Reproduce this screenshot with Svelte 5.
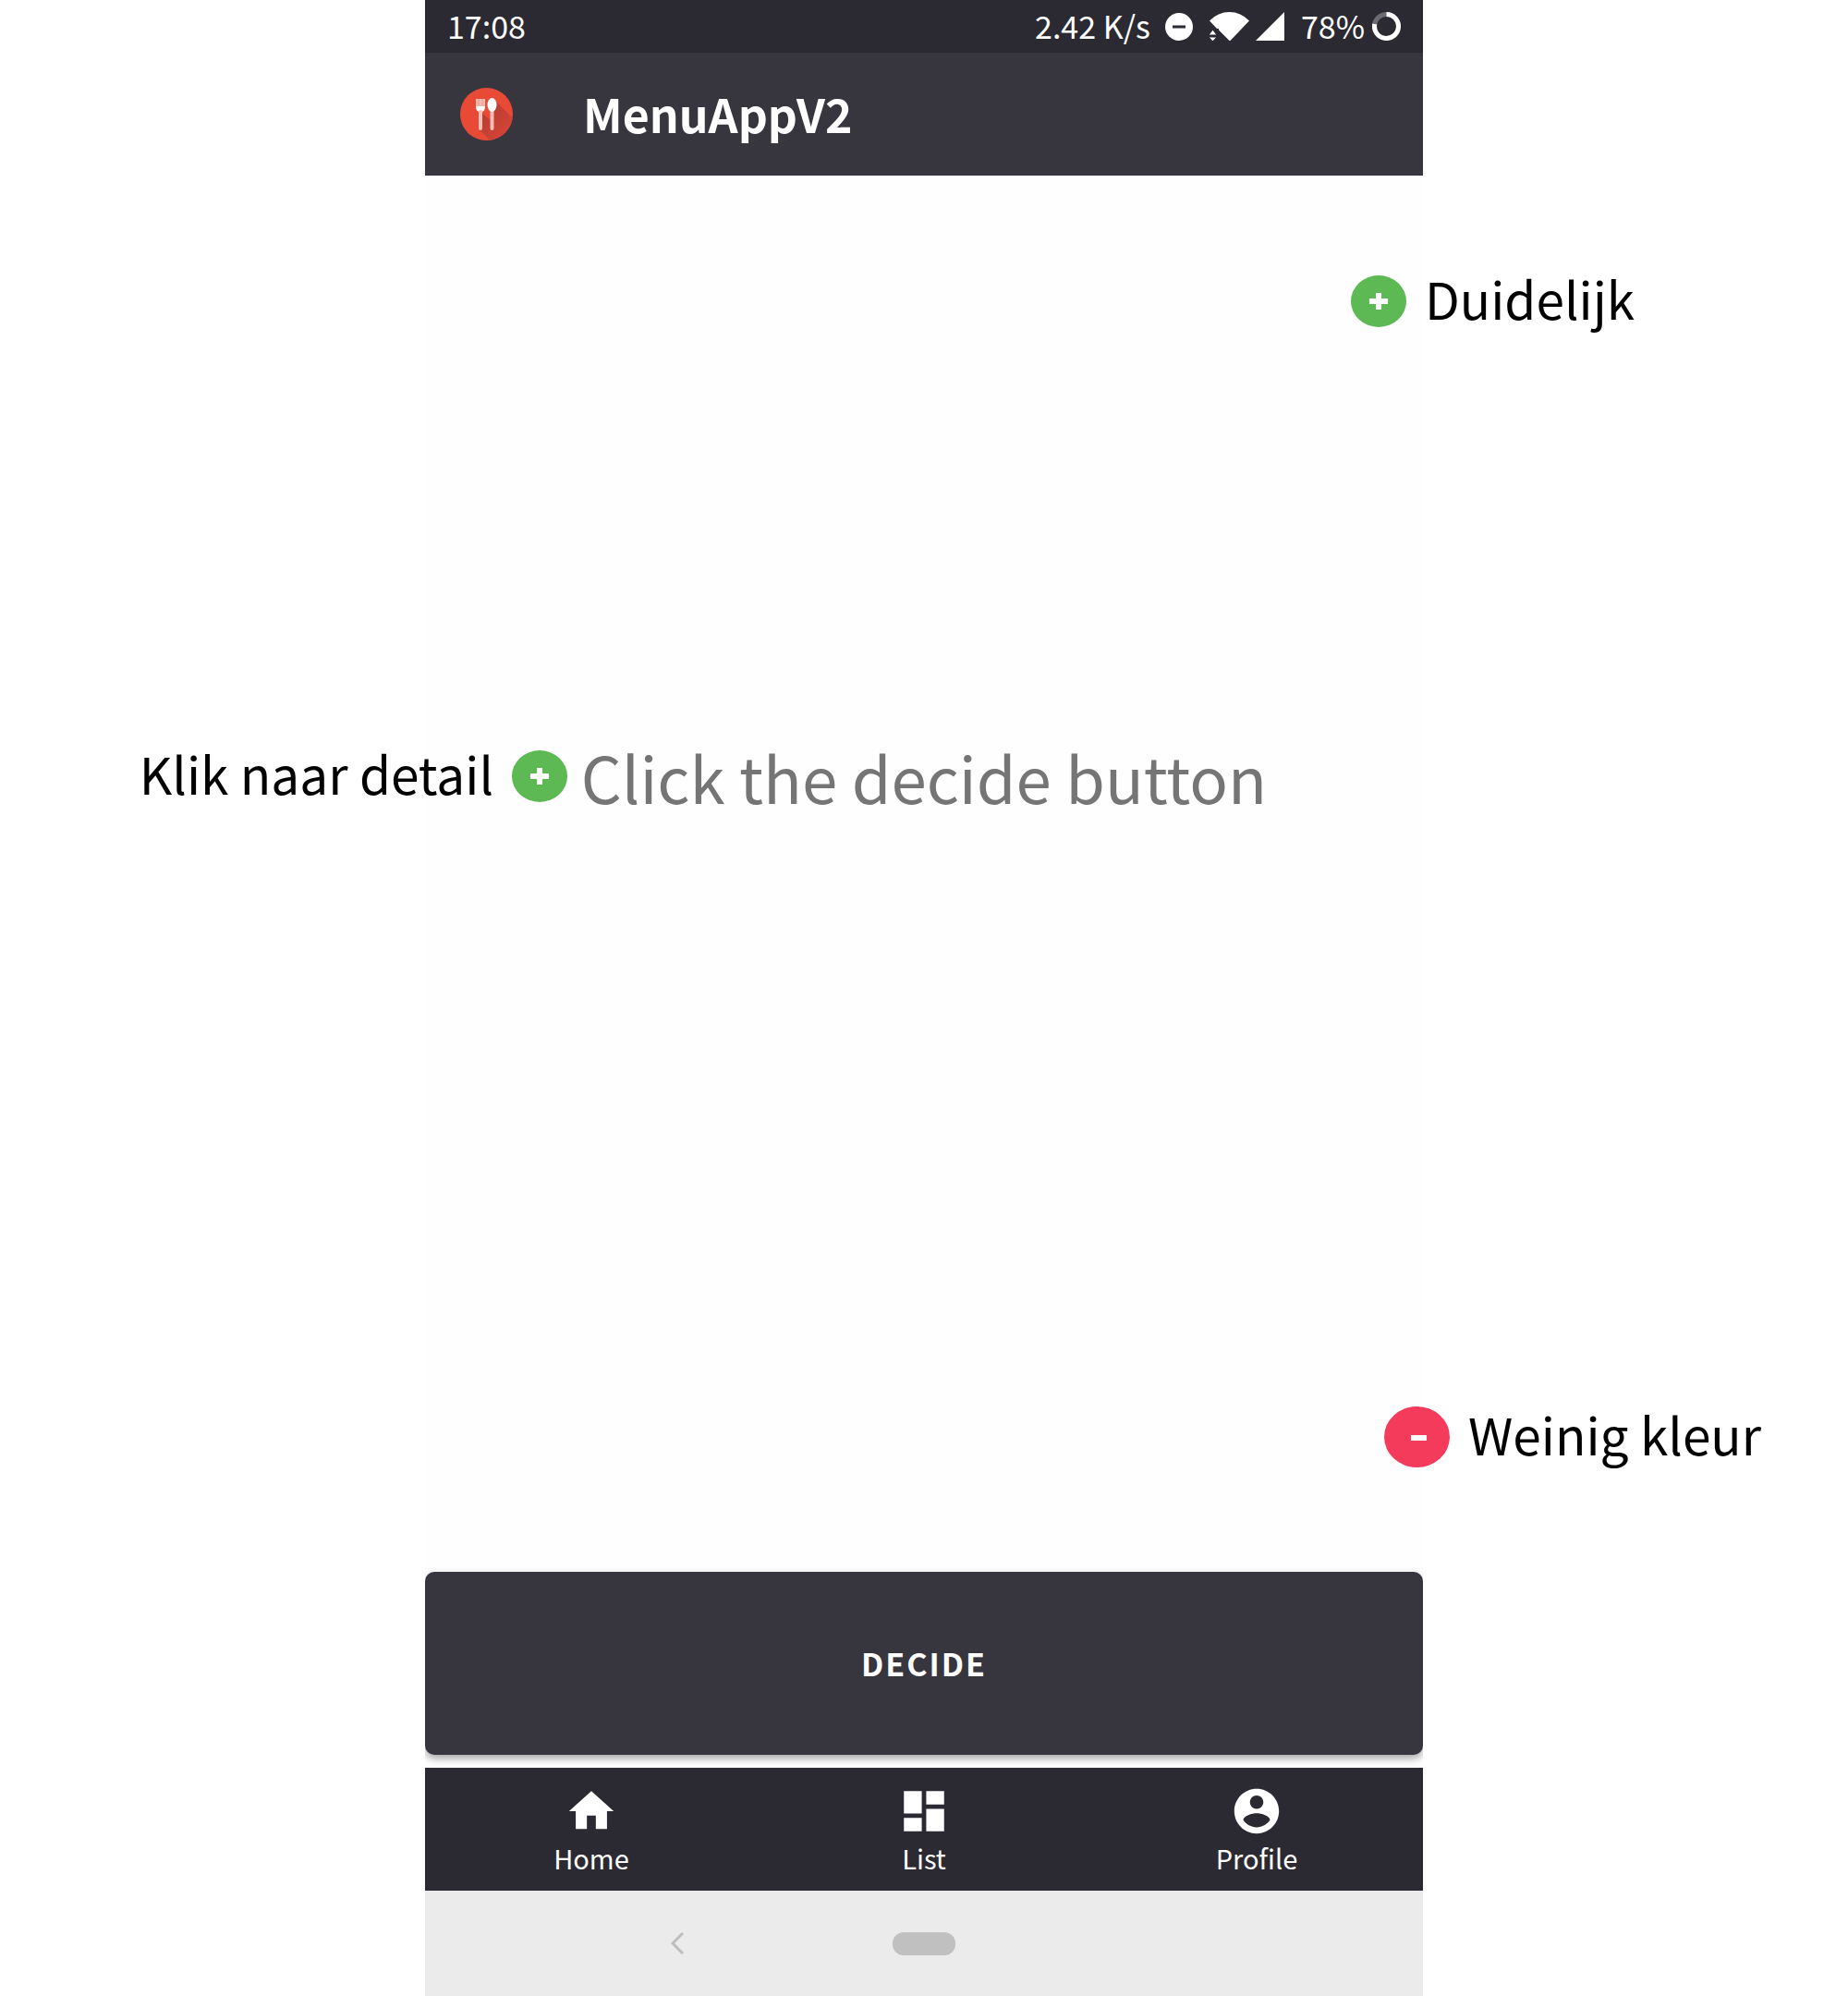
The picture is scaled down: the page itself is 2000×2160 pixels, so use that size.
<script>
  const tabs = [
    { label: 'Home', path: 'M10 20v-6h4v6h5v-8h3L12 3 2 12h3v8z' },
    { label: 'List', path: 'M3 13h8V3H3v10zm0 8h8v-6H3v6zm10 0h8V11h-8v10zm0-18v6h8V3h-8z' },
    {
      label: 'Profile',
      path: 'M12 2C6.48 2 2 6.48 2 12s4.48 10 10 10 10-4.48 10-10S17.52 2 12 2zm0 3c1.66 0 3 1.34 3 3s-1.34 3-3 3-3-1.34-3-3 1.34-3 3-3zm0 14.200c-2.500 0-4.710-1.280-6-3.220.030-1.990 4-3.080 6-3.080 1.990 0 5.970 1.090 6 3.080-1.290 1.940-3.500 3.220-6 3.220z'
    }
  ];
</script>

<div class="stage">
  <div class="phone">
    <div class="status">
      <span>17:08</span>
      <div class="indicators">
        <span>2.42 K/s</span>
        <svg class="dnd" viewBox="0 0 30 30" aria-hidden="true">
          <circle cx="15" cy="15" r="15" fill="#fff" />
          <path d="M8 15h14" stroke="#2b2932" stroke-width="3" />
        </svg>
        <svg class="wifi" viewBox="0 0 43 31" aria-hidden="true">
          <path d="M0 9.500Q9 0 21.500 0T43 9.500L22 31.500 10 19.500V18H8z" fill="#fff" />
          <path d="M-1 25L3.500 19 8 25zM-1 27H8L3.500 32z" fill="#fff" stroke="#2b2932" stroke-width="1" />
        </svg>
        <svg class="signal" viewBox="0 0 31 31" aria-hidden="true">
          <path d="M31 0V31H0z" fill="#fff" />
        </svg>
        <span>78%</span>
        <svg class="battery" viewBox="0 0 31 31" aria-hidden="true">
          <circle cx="15.500" cy="15.500" r="13" fill="none" stroke="#6d6b72" stroke-width="5" />
          <path d="M15.500 2.500A13 13 0 1 1 2.700 13" fill="none" stroke="#fff" stroke-width="5" />
        </svg>
      </div>
    </div>

    <header>
      <svg class="logo" viewBox="0 0 57 57" aria-hidden="true">
        <defs>
          <clipPath id="disc"><circle cx="28.500" cy="28.500" r="28.500" /></clipPath>
          <linearGradient id="shade" x1="0" y1="0" x2="1" y2="1">
            <stop offset="0.200" stop-color="#b83d33" />
            <stop offset="0.900" stop-color="#dd4636" />
          </linearGradient>
        </defs>
        <g clip-path="url(#disc)">
          <rect width="57" height="57" fill="#e84a36" />
          <path d="M38 14L62 38V62H38L20 45l3-18 10 8z" fill="url(#shade)" />
        </g>
        <path d="M17 12v9q0 4 3 5h4q3-1 3-5v-9z" fill="#f0a99e" />
        <path d="M18 12v9M22 12v9M26 12v9" stroke="#f8d0ca" stroke-width="1" />
        <path d="M17 20q0 5 4 6h2q4-1 4-6z" fill="#fff" />
        <path d="M22 26v18M34.500 26v18" stroke="#f5bdb4" stroke-width="4" stroke-linecap="round" />
        <ellipse cx="34.500" cy="18.500" rx="5" ry="7.500" fill="#fff" />
      </svg>
      <h1>MenuAppV2</h1>
    </header>

    <main>
      <p>Click the decide button</p>
      <button class="decide" type="button">DECIDE</button>
    </main>

    <nav class="tabs" aria-label="Main">
      {#each tabs as tab}
        <a href="#{tab.label.toLowerCase()}">
          <svg viewBox="0 0 24 24" aria-hidden="true"><path d={tab.path} fill="#fff" /></svg>
          <span>{tab.label}</span>
        </a>
      {/each}
    </nav>

    <div class="system">
      <button class="back" type="button" aria-label="Back">
        <svg viewBox="0 0 14 24" aria-hidden="true">
          <path d="M13 1L2 12l11 11" fill="none" stroke="#bdbdbd" stroke-width="3" />
        </svg>
      </button>
      <button class="pill" type="button" aria-label="Home screen"></button>
    </div>
  </div>

  <div class="note clear">
    <svg viewBox="0 0 60 56" aria-hidden="true">
      <ellipse cx="30" cy="28" rx="30" ry="28" fill="#5cb954" />
      <path d="M30 19v18M20 28h20" stroke="#fff" stroke-width="6" />
    </svg>
    <span>Duidelijk</span>
  </div>
  <div class="note detail">
    <span>Klik naar detail</span>
    <svg viewBox="0 0 60 56" aria-hidden="true">
      <ellipse cx="30" cy="28" rx="30" ry="28" fill="#5cb954" />
      <path d="M30 19v18M20 28h20" stroke="#fff" stroke-width="6" />
    </svg>
  </div>
  <div class="note colour">
    <svg class="minus" viewBox="0 0 71 66" aria-hidden="true">
      <ellipse cx="35.500" cy="33" rx="35.500" ry="33" fill="#f43b5c" />
      <path d="M29 34h17" stroke="#fff" stroke-width="6" />
    </svg>
    <span>Weinig kleur</span>
  </div>
</div>

<style>
  :global(body) {
    background: #fff;
  }

  .stage {
    position: relative;
    min-height: 100vh;
    display: flex;
    justify-content: center;
    font-family: 'Noto Sans CJK SC', 'Noto Sans', sans-serif;
  }

  svg {
    display: block;
    flex: none;
  }

  button {
    border: 0;
    padding: 0;
    background: none;
    font-family: inherit;
  }

  .phone {
    width: 54%;
    display: flex;
    flex-direction: column;
    overflow: clip;
    background: #fefefe;
    color: #fff;
  }

  .status {
    display: flex;
    align-items: center;
    justify-content: space-between;
    height: 57px;
    padding: 0 24px;
    background: #2b2932;
    font-size: 34px;
    line-height: 54px;
  }

  .status span {
    padding-bottom: 2px;
  }

  .indicators {
    display: flex;
    align-items: center;
  }

  .dnd {
    width: 30px;
    margin: 0 18px 0 16px;
  }

  .wifi {
    width: 43px;
    margin-right: 7px;
  }

  .signal {
    width: 31px;
    margin-right: 18px;
  }

  .battery {
    width: 31px;
    margin-left: 8px;
  }

  header {
    display: flex;
    align-items: center;
    gap: 76px;
    height: 133px;
    padding: 0 38px;
    background: #37353e;
  }

  .logo {
    width: 57px;
  }

  h1 {
    margin: 0;
    padding-bottom: 4px;
    font-size: 50px;
    line-height: 64px;
    font-weight: 700;
  }

  main {
    flex: 1;
    display: flex;
    flex-direction: column;
    justify-content: space-between;
    padding: 600px 0 14px;
  }

  p {
    margin: 0;
    text-align: center;
    font-size: 69px;
    line-height: 100px;
    color: #757575;
  }

  .decide {
    height: 198px;
    border-radius: 10px;
    background: #37353e;
    box-shadow: 0 4px 8px rgba(0, 0, 0, 0.35);
    color: #fff;
    font-size: 34px;
    line-height: 48px;
    font-weight: 700;
    letter-spacing: 2px;
  }

  .tabs {
    position: relative;
    display: grid;
    grid-template-columns: repeat(3, 1fr);
    height: 133px;
    background: #2b2932;
  }

  .tabs a {
    display: flex;
    flex-direction: column;
    align-items: center;
    padding-top: 18px;
    color: #fff;
    font-size: 29px;
    line-height: 42px;
    text-decoration: none;
  }

  .tabs svg {
    width: 58px;
  }

  .system {
    display: grid;
    grid-template-columns: 1fr 68px 1fr;
    align-items: center;
    height: 114px;
    background: #ebebeb;
  }

  .back {
    padding-left: 40px;
  }

  .back svg {
    width: 14px;
    margin: 0 auto;
  }

  .pill {
    height: 25px;
    border-radius: 12px;
    background: #c0c0c0;
  }

  .note {
    position: absolute;
    display: flex;
    align-items: center;
    gap: 20px;
    color: #000;
    font-size: 55px;
    line-height: 80px;
    white-space: nowrap;
  }

  .note span {
    padding-bottom: 8px;
  }

  .note svg {
    width: 60px;
  }

  .note .minus {
    width: 71px;
  }

  .clear {
    top: 282px;
    left: 73.1%;
  }

  .detail {
    top: 796px;
    right: 69.3%;
  }

  .colour {
    top: 1511px;
    left: 74.9%;
  }
</style>
